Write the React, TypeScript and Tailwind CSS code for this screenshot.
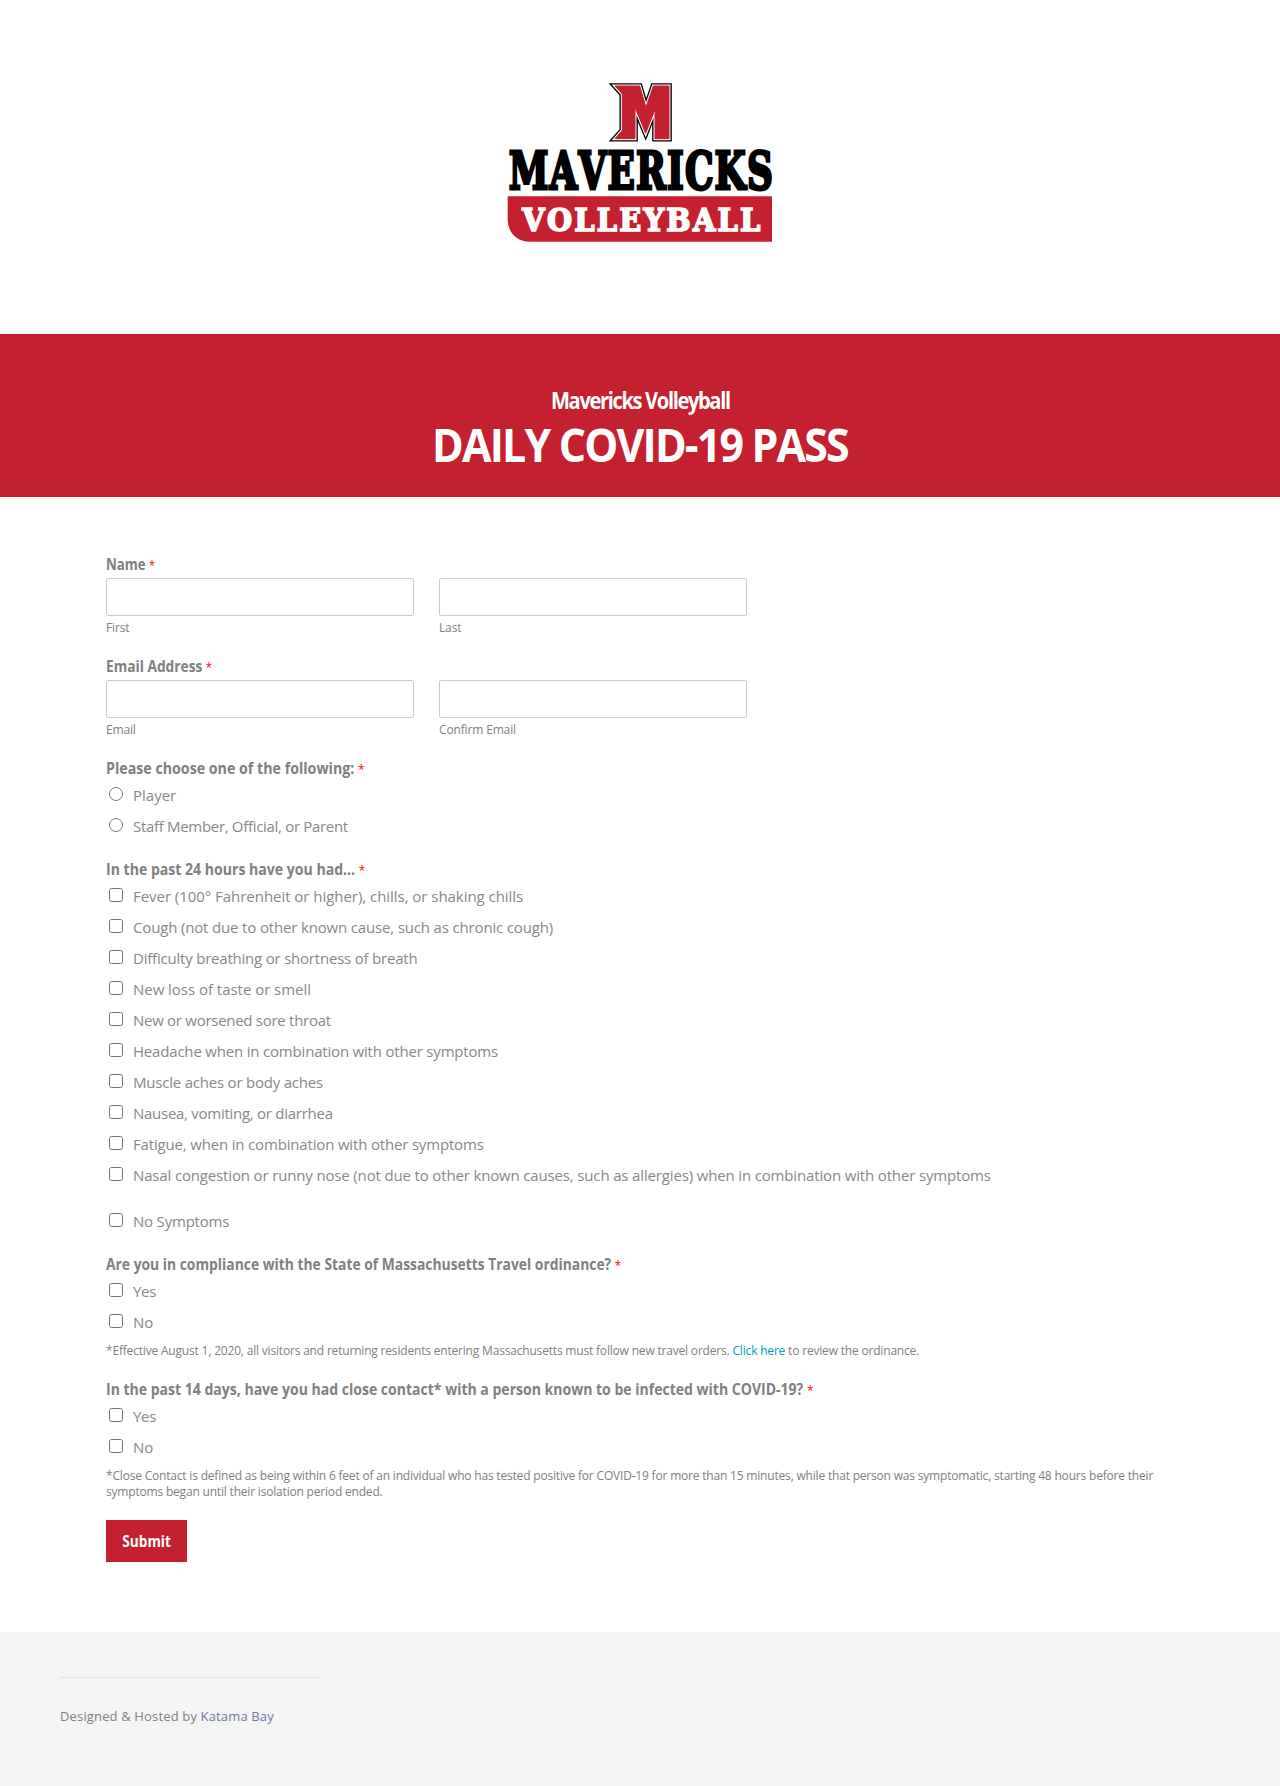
import React from "react";

const M_POINTS =
  "375,48 449,48 468,112 490,48 537,48 537,206 495,206 495,118 467,190 435,112 435,206 375,206 397,181 397,72";

function Logo() {
  return (
    <svg viewBox="0 0 900 540" className="block h-[180px] w-[300px] overflow-visible" aria-label="Mavericks Volleyball">
      <polygon points={M_POINTS} fill="#000" stroke="#000" strokeWidth="17" strokeMiterlimit="4" />
      <polygon points={M_POINTS} fill="#c52030" stroke="#fff" strokeWidth="9" strokeMiterlimit="4" />
      <polygon points={M_POINTS} fill="#c52030" stroke="#c52030" strokeWidth="3" />
      <text
        x="56"
        y="358"
        textLength="796"
        lengthAdjust="spacingAndGlyphs"
        fill="#000"
        stroke="#000"
        strokeWidth="9"
        className="font-['DejaVu_Serif'] text-[156px] font-bold tracking-[5px] [font-kerning:none]"
      >
        MAVERICKS
      </text>
      <path d="M53 379H846V515H121C80 515 53 488 53 447Z" fill="#c52030" />
      <text
        x="97"
        y="484"
        textLength="714"
        fill="#fff"
        stroke="#fff"
        strokeWidth="5"
        className="font-['DejaVu_Serif'] text-[96px] font-bold [font-kerning:none] [font-stretch:75%]"
      >
        VOLLEYBALL
      </text>
    </svg>
  );
}

function Label({ children, scale = "scale-x-[0.908]" }: { children: React.ReactNode; scale?: string }) {
  return (
    <div className={`h-[23px] w-max origin-left whitespace-nowrap text-[15.5px] font-bold leading-[19px] ${scale}`}>
      {children} <span className="text-[13px] font-normal text-[#ff0000]">*</span>
    </div>
  );
}

function Field({ label }: { label: string }) {
  return (
    <div className="w-[308px]">
      <input type="text" className="block h-[38px] w-full rounded-[2px] border border-[#ccc] bg-white px-2.5" />
      <div className="mt-[3px] h-[18px] text-[12px] leading-[18px] tracking-[-0.15px]">{label}</div>
    </div>
  );
}

type OptionProps = { type: "radio" | "checkbox"; name: string; tracking?: string; children: string };

function Option({ type, name, tracking = "", children }: OptionProps) {
  return (
    <label className="flex h-[31px] items-start whitespace-nowrap">
      <input type={type} name={name} className="ml-[3px] mt-[5px] h-[14px] w-[14px]" />
      <span className={`ml-[10px] text-[15px] leading-[26px] text-[#888] ${tracking}`}>{children}</span>
    </label>
  );
}

const SYMPTOMS: [string, string][] = [
  ["Fever (100° Fahrenheit or higher), chills, or shaking chills", "tracking-[-0.04px]"],
  ["Cough (not due to other known cause, such as chronic cough)", "tracking-[-0.16px]"],
  ["Difficulty breathing or shortness of breath", "tracking-[-0.21px]"],
  ["New loss of taste or smell", "tracking-[-0.03px]"],
  ["New or worsened sore throat", "tracking-[-0.28px]"],
  ["Headache when in combination with other symptoms", "tracking-[-0.19px]"],
  ["Muscle aches or body aches", "tracking-[-0.21px]"],
  ["Nausea, vomiting, or diarrhea", "tracking-[-0.27px]"],
  ["Fatigue, when in combination with other symptoms", "tracking-[-0.17px]"],
  [
    "Nasal congestion or runny nose (not due to other known causes, such as allergies) when in combination with other symptoms",
    "tracking-[-0.153px]",
  ],
];

export default function App() {
  return (
    <div className="flex h-[1786px] w-[1280px] flex-col bg-white font-['Open_Sans','Noto_Sans',sans-serif] text-[#808080]">
      <header className="flex h-[334px] justify-center pt-[70px]">
        <Logo />
      </header>

      <section className="flex h-[163px] flex-col items-center bg-[#c52030] pt-[49px] font-bold text-white">
        <h2 className="scale-x-[0.856] whitespace-nowrap text-[23.5px] leading-[34px] tracking-[-1.6px]">
          Mavericks Volleyball
        </h2>
        <h1 className="mt-px scale-x-[0.912] whitespace-nowrap text-[47px] leading-[52px] tracking-[-2px]">
          DAILY COVID-19 PASS
        </h1>
      </section>

      <form className="flex h-[1135px] flex-col pl-[106px] pt-[55px]">
        <div className="h-[102px] pt-[3px]">
          <Label scale="scale-x-[0.855]">Name</Label>
          <div className="flex gap-[25px]">
            <Field label="First" />
            <Field label="Last" />
          </div>
        </div>
        <div className="h-[102px] pt-[3px]">
          <Label scale="scale-x-[0.886]">Email Address</Label>
          <div className="flex gap-[25px]">
            <Field label="Email" />
            <Field label="Confirm Email" />
          </div>
        </div>
        <div className="h-[101px] pt-[3px]">
          <Label scale="scale-x-[0.917]">Please choose one of the following:</Label>
          <Option type="radio" name="role">Player</Option>
          <Option type="radio" name="role" tracking="tracking-[-0.31px]">Staff Member, Official, or Parent</Option>
        </div>
        <div className="h-[395px] pt-[3px]">
          <Label>In the past 24 hours have you had...</Label>
          {SYMPTOMS.map(([text, tracking]) => (
            <Option key={text} type="checkbox" name="symptoms" tracking={tracking}>{text}</Option>
          ))}
          <div className="pt-[15px]">
            <Option type="checkbox" name="symptoms" tracking="tracking-[-0.2px]">No Symptoms</Option>
          </div>
        </div>
        <div className="h-[125px] pt-[3px]">
          <Label scale="scale-x-[0.894]">Are you in compliance with the State of Massachusetts Travel ordinance?</Label>
          <Option type="checkbox" name="travel" tracking="tracking-[-0.3px]">Yes</Option>
          <Option type="checkbox" name="travel">No</Option>
          <p className="whitespace-nowrap pt-[3px] text-[12px] leading-[16px] tracking-[-0.185px]">
            *Effective August 1, 2020, all visitors and returning residents entering Massachusetts must follow new travel orders.{" "}
            <a href="#" className="text-[#0099cc]">Click here</a> to review the ordinance.
          </p>
        </div>
        <div className="h-[143px] pt-[3px]">
          <Label scale="scale-x-[0.905]">
            In the past 14 days, have you had close contact* with a person known to be infected with COVID-19?
          </Label>
          <Option type="checkbox" name="contact" tracking="tracking-[-0.3px]">Yes</Option>
          <Option type="checkbox" name="contact">No</Option>
          <p className="whitespace-nowrap pt-[3px] text-[12px] leading-[16px] tracking-[-0.19px]">
            *Close Contact is defined as being within 6 feet of an individual who has tested positive for COVID-19 for more than 15 minutes, while that person was symptomatic, starting 48 hours before their
            <br />
            symptoms began until their isolation period ended.
          </p>
        </div>
        <button
          type="button"
          className="flex h-[42px] w-[81px] items-center justify-center bg-[#c52030] pt-0.5 text-[15.5px] font-bold text-white"
        >
          <span className="scale-x-[0.88]">Submit</span>
        </button>
      </form>

      <footer className="h-[154px] bg-[#f4f4f4] pl-[60px] pt-[45px]">
        <div className="h-px w-[262px] bg-[#e2e2e2]" />
        <p className="mt-[28px] text-[13px] leading-5 tracking-[0.15px]">
          Designed &amp; Hosted by <a href="#" className="text-[#6c7a9e]">Katama Bay</a>
        </p>
      </footer>
    </div>
  );
}
